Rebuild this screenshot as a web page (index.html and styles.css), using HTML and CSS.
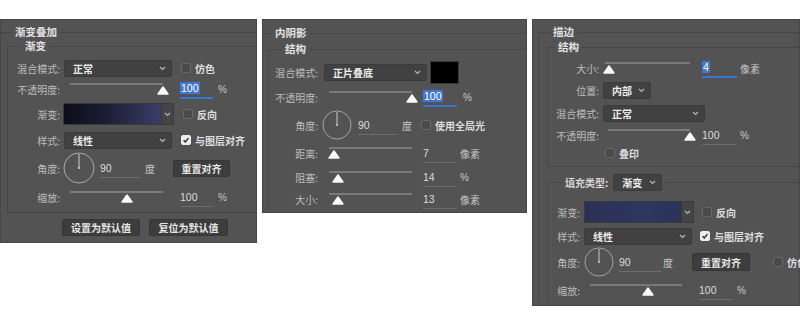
FILE: index.html
```html
<!DOCTYPE html>
<html lang="zh-CN">
<head>
  <meta charset="UTF-8" />
  <meta name="viewport" content="width=device-width, initial-scale=1.0" />
  <title>图层样式</title>
  <link rel="stylesheet" href="styles.css">
</head>
<body>
  <div class="stage">

    <!-- 渐变叠加 -->
    <section class="panel p1">
      <fieldset class="outer">
        <legend class="title">渐变叠加</legend>
        <fieldset class="inner">
          <legend class="sub">渐变</legend>
          <div class="row h20">
            <span class="lbl">混合模式:</span>
            <div class="select ml4 w108"><span>正常</span><svg class="chev" viewBox="0 0 7 5"><polyline points="1,1 3.5,3.5 6,1"/></svg></div>
            <span class="check ml9"><i class="box"></i>仿色</span>
          </div>
          <div class="row h22">
            <span class="lbl">不透明度:</span>
            <div class="slider ml10 w93"><svg class="thumb" style="left:100%" viewBox="0 0 12 9"><path d="M6 1 L11 8 L1 8 Z"/></svg></div>
            <span class="value ml17 w33 focus"><em>100</em></span>
            <span class="unit ml5">%</span>
          </div>
          <div class="row h24 mt2">
            <span class="lbl">渐变:</span>
            <div class="grad ml3">
              <span class="swatch w97 g1"></span>
              <span class="drop"><svg class="chev" viewBox="0 0 7 5"><polyline points="1,1 3.5,3.5 6,1"/></svg></span>
            </div>
            <span class="check ml9"><i class="box"></i>反向</span>
          </div>
          <div class="row h28">
            <span class="lbl">样式:</span>
            <div class="select ml4 w108"><span>线性</span><svg class="chev" viewBox="0 0 7 5"><polyline points="1,1 3.5,3.5 6,1"/></svg></div>
            <span class="check ml9"><i class="box on"><svg viewBox="0 0 10 10"><polyline points="2,5.2 4.2,7.4 8,2.6"/></svg></i>与图层对齐</span>
          </div>
          <div class="row h28">
            <span class="lbl">角度:</span>
            <svg class="dial ml3 d32" viewBox="0 0 32 32"><circle cx="16" cy="16" r="15"/><line x1="16" y1="16" x2="16" y2="2"/><circle class="dot" cx="16" cy="16" r="1"/></svg>
            <span class="value ml5 w40">90</span>
            <span class="unit ml5">度</span>
            <span class="btn ml18 w57">重置对齐</span>
          </div>
          <div class="row h30">
            <span class="lbl">缩放:</span>
            <div class="slider ml10 w93"><svg class="thumb" style="left:61%" viewBox="0 0 12 9"><path d="M6 1 L11 8 L1 8 Z"/></svg></div>
            <span class="value ml17 w33">100</span>
            <span class="unit ml5">%</span>
          </div>
        </fieldset>
        <div class="actions">
          <span class="btn w78">设置为默认值</span>
          <span class="btn w79">复位为默认值</span>
        </div>
      </fieldset>
    </section>

    <!-- 内阴影 -->
    <section class="panel p2">
      <fieldset class="outer">
        <legend class="title">内阴影</legend>
        <fieldset class="inner">
          <legend class="sub">结构</legend>
          <div class="row h24">
            <span class="lbl">混合模式:</span>
            <div class="select ml6 w103"><span>正片叠底</span><svg class="chev" viewBox="0 0 7 5"><polyline points="1,1 3.5,3.5 6,1"/></svg></div>
            <span class="color ml3"></span>
          </div>
          <div class="row h26">
            <span class="lbl">不透明度:</span>
            <div class="slider ml11 w83"><svg class="thumb" style="left:100%" viewBox="0 0 12 9"><path d="M6 1 L11 8 L1 8 Z"/></svg></div>
            <span class="value ml11 w34 focus"><em>100</em></span>
            <span class="unit ml6">%</span>
          </div>
          <div class="row h30">
            <span class="lbl">角度:</span>
            <svg class="dial ml4 d30" viewBox="0 0 32 32"><circle cx="16" cy="16" r="15"/><line x1="16" y1="16" x2="16" y2="2"/><circle class="dot" cx="16" cy="16" r="1"/></svg>
            <span class="value ml6 w40">90</span>
            <span class="unit ml4">度</span>
            <span class="check ml9"><i class="box"></i>使用全局光</span>
          </div>
          <div class="row h26">
            <span class="lbl">距离:</span>
            <div class="slider ml11 w83"><svg class="thumb" style="left:6%" viewBox="0 0 12 9"><path d="M6 1 L11 8 L1 8 Z"/></svg></div>
            <span class="value ml11 w34">7</span>
            <span class="unit ml3">像素</span>
          </div>
          <div class="row h22">
            <span class="lbl">阻塞:</span>
            <div class="slider ml11 w83"><svg class="thumb" style="left:11%" viewBox="0 0 12 9"><path d="M6 1 L11 8 L1 8 Z"/></svg></div>
            <span class="value ml11 w34">14</span>
            <span class="unit ml3">%</span>
          </div>
          <div class="row h22">
            <span class="lbl">大小:</span>
            <div class="slider ml11 w83"><svg class="thumb" style="left:11%" viewBox="0 0 12 9"><path d="M6 1 L11 8 L1 8 Z"/></svg></div>
            <span class="value ml11 w34">13</span>
            <span class="unit ml3">像素</span>
          </div>
        </fieldset>
      </fieldset>
    </section>

    <!-- 描边 -->
    <section class="panel p3">
      <fieldset class="outer">
        <legend class="title">描边</legend>
        <fieldset class="inner">
          <legend class="sub">结构</legend>
          <div class="row h20">
            <span class="lbl">大小:</span>
            <div class="slider ml6 w85"><svg class="thumb" style="left:5%" viewBox="0 0 12 9"><path d="M6 1 L11 8 L1 8 Z"/></svg></div>
            <span class="value ml12 w35 focus"><em>4</em></span>
            <span class="unit ml3">像素</span>
          </div>
          <div class="row h24">
            <span class="lbl">位置:</span>
            <div class="select ml4 w48"><span>内部</span><svg class="chev" viewBox="0 0 7 5"><polyline points="1,1 3.5,3.5 6,1"/></svg></div>
          </div>
          <div class="row h22">
            <span class="lbl">混合模式:</span>
            <div class="select ml4 w102"><span>正常</span><svg class="chev" viewBox="0 0 7 5"><polyline points="1,1 3.5,3.5 6,1"/></svg></div>
          </div>
          <div class="row h22">
            <span class="lbl">不透明度:</span>
            <div class="slider ml9 w82"><svg class="thumb" style="left:100%" viewBox="0 0 12 9"><path d="M6 1 L11 8 L1 8 Z"/></svg></div>
            <span class="value ml12 w35">100</span>
            <span class="unit ml3">%</span>
          </div>
          <div class="row h14">
            <span class="lbl"></span>
            <span class="check ml6"><i class="box"></i>叠印</span>
          </div>
        </fieldset>

        <fieldset class="fill">
          <legend class="fill-type">
            <span>填充类型:</span>
            <div class="select ml5 w49"><span>渐变</span><svg class="chev" viewBox="0 0 7 5"><polyline points="1,1 3.5,3.5 6,1"/></svg></div>
          </legend>
          <div class="row h26">
            <span class="lbl">渐变:</span>
            <div class="grad ml4">
              <span class="swatch w96 g2"></span>
              <span class="drop"><svg class="chev" viewBox="0 0 7 5"><polyline points="1,1 3.5,3.5 6,1"/></svg></span>
            </div>
            <span class="check ml8"><i class="box"></i>反向</span>
          </div>
          <div class="row h22">
            <span class="lbl">样式:</span>
            <div class="select ml4 w108"><span>线性</span><svg class="chev" viewBox="0 0 7 5"><polyline points="1,1 3.5,3.5 6,1"/></svg></div>
            <span class="check ml8"><i class="box on"><svg viewBox="0 0 10 10"><polyline points="2,5.2 4.2,7.4 8,2.6"/></svg></i>与图层对齐</span>
          </div>
          <div class="row h30">
            <span class="lbl">角度:</span>
            <svg class="dial ml4 d30" viewBox="0 0 32 32"><circle cx="16" cy="16" r="15"/><line x1="16" y1="16" x2="16" y2="2"/><circle class="dot" cx="16" cy="16" r="1"/></svg>
            <span class="value ml5 w42">90</span>
            <span class="unit ml2">度</span>
            <span class="btn ml19 w58">重置对齐</span>
            <span class="check ml23"><i class="box"></i>仿色</span>
          </div>
          <div class="row h26">
            <span class="lbl">缩放:</span>
            <div class="slider ml10 w92"><svg class="thumb" style="left:63%" viewBox="0 0 12 9"><path d="M6 1 L11 8 L1 8 Z"/></svg></div>
            <span class="value ml17 w34">100</span>
            <span class="unit ml4">%</span>
          </div>
        </fieldset>
      </fieldset>
    </section>

  </div>
</body>
</html>
```

FILE: styles.css
```css
html, body {
  margin: 0;
  padding: 0;
  background: #fff;
}

* {
  box-sizing: border-box;
}

body {
  font-family: "Noto Sans CJK SC", "Noto Sans", sans-serif;
  font-size: 10px;
  color: #c2c2c2;
}

.stage {
  display: flex;
  align-items: flex-start;
  width: 800px;
  height: 330px;
  padding-top: 19px;
  overflow: hidden;
}

.panel {
  flex: none;
  background: #535353;
  box-shadow: inset 0 0 0 1px #474747;
  overflow: hidden;
}

.p1 { width: 257px; height: 224px; padding-top: 6px; }
.p2 { width: 265px; height: 194px; padding-top: 7px; margin-left: 5px; }
.p3 { width: 268px; height: 287px; padding-top: 6px; margin-left: 5px; }

fieldset {
  margin: 0;
  padding: 0;
  min-width: 0;
  border: 0;
  border-top: 1px solid #464646;
}

legend {
  padding: 0 3px;
  line-height: 14px;
  height: 14px;
  font-weight: bold;
  color: #e2e2e2;
  font-size: 10.5px;
}

.inner {
  border-left: 1px solid #464646;
}

/* panel 1 */
.p1 .outer > legend { margin-left: 12px; }
.p1 .inner { margin-left: 7px; padding-top: 5px; border-bottom: 1px solid #464646; }
.p1 .inner > legend { margin-left: 14px; }
.p1 .lbl { width: 52px; }

.actions {
  display: flex;
  gap: 9px;
  margin-top: 6px;
  padding-left: 62px;
}

/* panel 2 */
.p2 .outer > legend { margin-left: 10px; }
.p2 .inner { margin-left: 6px; margin-top: 2px; padding-top: 4px; }
.p2 .inner > legend { margin-left: 13px; }
.p2 .lbl { width: 49px; }

/* panel 3 */
.p3 .outer { margin-left: 6px; border-left: 1px solid #464646; }
.p3 .outer > legend { margin-left: 11px; }
.p3 .inner { margin-left: 8px; margin-top: 1px; padding-top: 4px; padding-bottom: 6px; border-bottom: 1px solid #464646; }
.p3 .inner > legend { margin-left: 7px; }
.p3 .inner .lbl { width: 51px; }

.p3 .fill {
  margin-left: 8px;
  margin-top: 7px;
  padding-top: 8px;
  border-left: 1px solid #464646;
}

.fill-type {
  display: flex;
  align-items: center;
  height: 17px;
  margin-left: 14px;
  color: #d6d6d6;
  font-size: 10px;
}

.p3 .fill .lbl { width: 32px; }

/* rows */
.row {
  display: flex;
  align-items: center;
  white-space: nowrap;
}

.h14 { height: 14px; }
.h20 { height: 20px; }
.h22 { height: 22px; }
.h24 { height: 24px; }
.h26 { height: 26px; }
.h28 { height: 28px; }
.h30 { height: 30px; }
.mt2 { margin-top: 2px; }

.lbl {
  flex: none;
  text-align: right;
  color: #bdbdbd;
}

.ml2 { margin-left: 2px; }
.ml3 { margin-left: 3px; }
.ml4 { margin-left: 4px; }
.ml5 { margin-left: 5px; }
.ml6 { margin-left: 6px; }
.ml8 { margin-left: 8px; }
.ml9 { margin-left: 9px; }
.ml10 { margin-left: 10px; }
.ml11 { margin-left: 11px; }
.ml12 { margin-left: 12px; }
.ml17 { margin-left: 17px; }
.ml18 { margin-left: 18px; }
.ml19 { margin-left: 19px; }
.ml23 { margin-left: 23px; }

.w33 { width: 33px; }
.w34 { width: 34px; }
.w35 { width: 35px; }
.w40 { width: 40px; }
.w42 { width: 42px; }
.w48 { width: 48px; }
.w49 { width: 49px; }
.w57 { width: 57px; }
.w58 { width: 58px; }
.w78 { width: 78px; }
.w79 { width: 79px; }
.w82 { width: 82px; }
.w83 { width: 83px; }
.w85 { width: 85px; }
.w92 { width: 92px; }
.w93 { width: 93px; }
.w96 { width: 96px; }
.w97 { width: 97px; }
.w102 { width: 102px; }
.w103 { width: 103px; }
.w108 { width: 108px; }

/* controls */
.select {
  flex: none;
  display: flex;
  align-items: center;
  justify-content: space-between;
  height: 17px;
  padding: 0 5px 0 8px;
  background: #414141;
  border: 1px solid #3b3b3b;
  border-radius: 2px;
  color: #ececec;
  font-weight: bold;
}

.chev {
  width: 7px;
  height: 5px;
  fill: none;
  stroke: #b5b5b5;
  stroke-width: 1.2;
}

.check {
  display: flex;
  align-items: center;
  color: #dedede;
  font-weight: bold;
}

.box {
  width: 10px;
  height: 10px;
  margin-right: 4px;
  border: 1px solid #696969;
  border-radius: 2px;
  background: #4a4a4a;
}

.box.on {
  background: #ededed;
  border-color: #ededed;
}

.box svg {
  display: block;
  width: 8px;
  height: 8px;
  fill: none;
  stroke: #2a2a2a;
  stroke-width: 1.8;
}

.slider {
  flex: none;
  position: relative;
  height: 12px;
  border-top: 2px solid #7a7a7a;
}

.thumb {
  position: absolute;
  top: 1px;
  width: 12px;
  height: 9px;
  margin-left: -6px;
  fill: #fafafa;
  stroke: #fafafa;
  stroke-width: 1.4;
  stroke-linejoin: round;
}

.value {
  flex: none;
  display: flex;
  align-items: center;
  height: 19px;
  border-bottom: 1px solid #6c6c6c;
  color: #dcdcdc;
  font-family: "Liberation Sans", "Noto Sans", sans-serif;
  font-size: 10.5px;
}

.value em {
  font-style: normal;
  background: #4477cf;
  color: #fff;
  padding: 0 1px;
  line-height: 12px;
}

.value.focus {
  border-bottom: 2px solid #3a74d4;
}

.unit {
  color: #c8c8c8;
  font-family: "Liberation Sans", "Noto Sans CJK SC", sans-serif;
}

.grad {
  flex: none;
  display: flex;
  height: 22px;
  border: 1px solid #3a3a3a;
}

.swatch {
  height: 100%;
}

.g1 {
  background: linear-gradient(90deg, #0d0d19 0%, #1d1e35 45%, #3a3d67 100%);
}

.g2 {
  background: linear-gradient(90deg, #2a3055 0%, #2f3660 60%, #2c3358 100%);
}

.drop {
  width: 12px;
  display: flex;
  align-items: center;
  justify-content: center;
  background: #454545;
  border-left: 1px solid #3a3a3a;
}

.color {
  width: 29px;
  height: 23px;
  background: #000;
  border: 1px solid #3a3a3a;
}

.dial {
  flex: none;
  fill: none;
  stroke: #a9a9a9;
  stroke-width: 1;
}

.dial line { stroke: #d0d0d0; }
.dial .dot { fill: #d0d0d0; stroke: none; }

.d32 { width: 32px; height: 32px; }
.d30 { width: 30px; height: 30px; }

.btn {
  flex: none;
  display: flex;
  align-items: center;
  justify-content: center;
  height: 17px;
  background: #3d3d3d;
  border: 1px solid #363636;
  border-radius: 2px;
  color: #e6e6e6;
  font-weight: bold;
}

.p3 .fill .btn { height: 18px; }
```
